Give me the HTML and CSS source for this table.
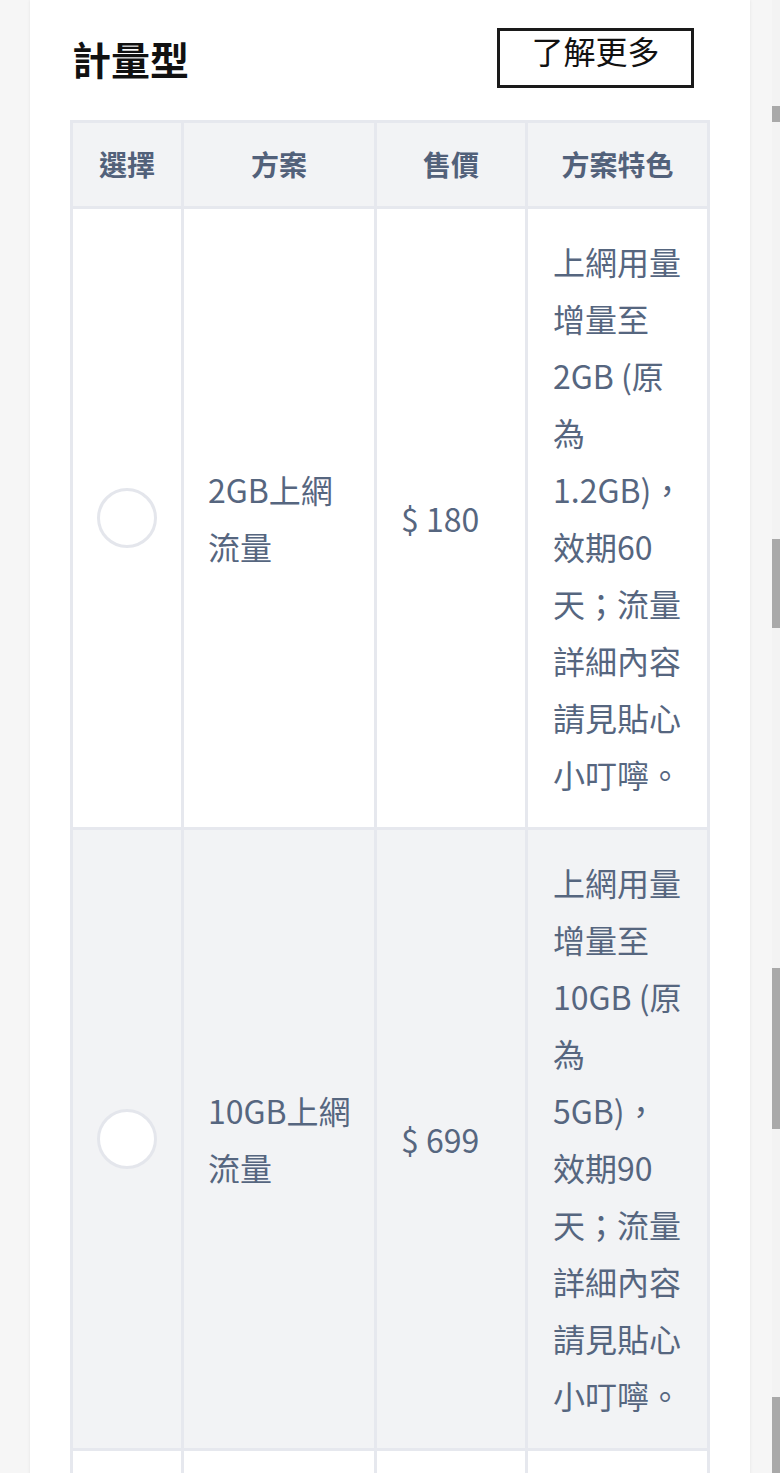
FILE: index.html
```html
<!DOCTYPE html>
<html lang="zh-Hant">
<head>
<meta charset="utf-8">
<title>計量型</title>
<link rel="stylesheet" href="styles.css">
</head>
<body>
<div class="slider">
  <section class="card">
    <header class="card-head">
      <h2 class="card-title">計量型</h2>
      <a class="more-btn" href="#">了解更多</a>
    </header>
    <table class="plans">
      <colgroup>
        <col class="c-sel"><col class="c-plan"><col class="c-price"><col class="c-feat">
      </colgroup>
      <thead>
        <tr><th>選擇</th><th>方案</th><th>售價</th><th>方案特色</th></tr>
      </thead>
      <tbody>
        <tr>
          <td class="sel"><span class="radio"></span></td>
          <td class="plan">2GB上網流量</td>
          <td>$ 180</td>
          <td class="feat">上網用量增量至2GB (原為1.2GB)，效期60天；流量詳細內容請見貼心小叮嚀。</td>
        </tr>
        <tr class="alt">
          <td class="sel"><span class="radio"></span></td>
          <td class="plan">10GB上網流量</td>
          <td>$ 699</td>
          <td class="feat">上網用量增量至10GB (原為5GB)，效期90天；流量詳細內容請見貼心小叮嚀。</td>
        </tr>
        <tr class="more-row">
          <td class="sel"></td>
          <td class="plan"></td>
          <td></td>
          <td class="feat"></td>
        </tr>
      </tbody>
    </table>
  </section>
  <div class="next-card">
    <div class="ghost g1"></div>
    <div class="ghost g2"></div>
    <div class="ghost g3"></div>
    <div class="ghost g4"></div>
  </div>
</div>
</body>
</html>
```

FILE: styles.css
```css
html, body {
  margin: 0;
  padding: 0;
}
body {
  background: #f6f6f6;
  height: 1473px;
  overflow: hidden;
  font-family: "Noto Sans CJK TC", "Noto Sans", sans-serif;
}
.slider {
  display: flex;
  align-items: flex-start;
  padding-left: 30px;
}
.card {
  flex: 0 0 720px;
  width: 720px;
  background: #fff;
  box-shadow: 0 0 3px rgba(0, 0, 0, 0.08);
  min-height: 1473px;
}
.card-head {
  display: flex;
  justify-content: space-between;
  align-items: center;
  height: 60px;
  padding: 28px 56px 0 42px;
}
.card-title {
  margin: 0;
  font-size: 39px;
  font-weight: 700;
  color: #111;
  line-height: 1;
}
.more-btn {
  box-sizing: border-box;
  width: 197px;
  height: 60px;
  border: 3px solid #1a1a1a;
  color: #111;
  text-decoration: none;
  font-size: 32px;
  line-height: 38px;
  text-align: center;
}
.plans {
  margin: 32px 0 0 40px;
  width: 640px;
  table-layout: fixed;
  border-collapse: separate;
  border-spacing: 0;
  border-top: 3px solid #e6e8ee;
  border-left: 3px solid #e6e8ee;
  color: #56667f;
}
.c-sel { width: 111px; }
.c-plan { width: 193px; }
.c-price { width: 151px; }
.c-feat { width: 182px; }
.plans th,
.plans td {
  border-right: 3px solid #e6e8ee;
  border-bottom: 3px solid #e6e8ee;
  vertical-align: middle;
}
.plans th {
  background: #f2f3f5;
  font-size: 28px;
  font-weight: 700;
  line-height: 57px;
  padding: 13px 0;
  text-align: center;
  color: #52617a;
}
.plans td {
  font-size: 32px;
  line-height: 57px;
  padding: 24px 24px;
  text-align: left;
}
.plans td.plan {
  padding: 24px 16px 24px 24px;
}
.plans td.feat {
  padding: 24px 25px;
}
.plans td.sel {
  padding: 24px 0;
  text-align: center;
}
.plans tr.alt td {
  background: #f2f3f5;
}
.plans tr.more-row td {
  height: 300px;
  background: #fff;
}
.radio {
  display: block;
  box-sizing: border-box;
  width: 60px;
  height: 60px;
  margin: 0 auto;
  border-radius: 50%;
  border: 3px solid #e4e6ec;
  background: #fff;
}
.next-card {
  margin-left: 22px;
  width: 8px;
  height: 1473px;
  background: #f3f3f3;
  display: flex;
  flex-direction: column;
}
.ghost {
  background: #a9a9a9;
}
.g1 { margin-top: 106px; height: 17px; }
.g2 { margin-top: 417px; height: 93px; }
.g3 { margin-top: 340px; height: 169px; }
.g4 { margin-top: 268px; height: 80px; }
```
